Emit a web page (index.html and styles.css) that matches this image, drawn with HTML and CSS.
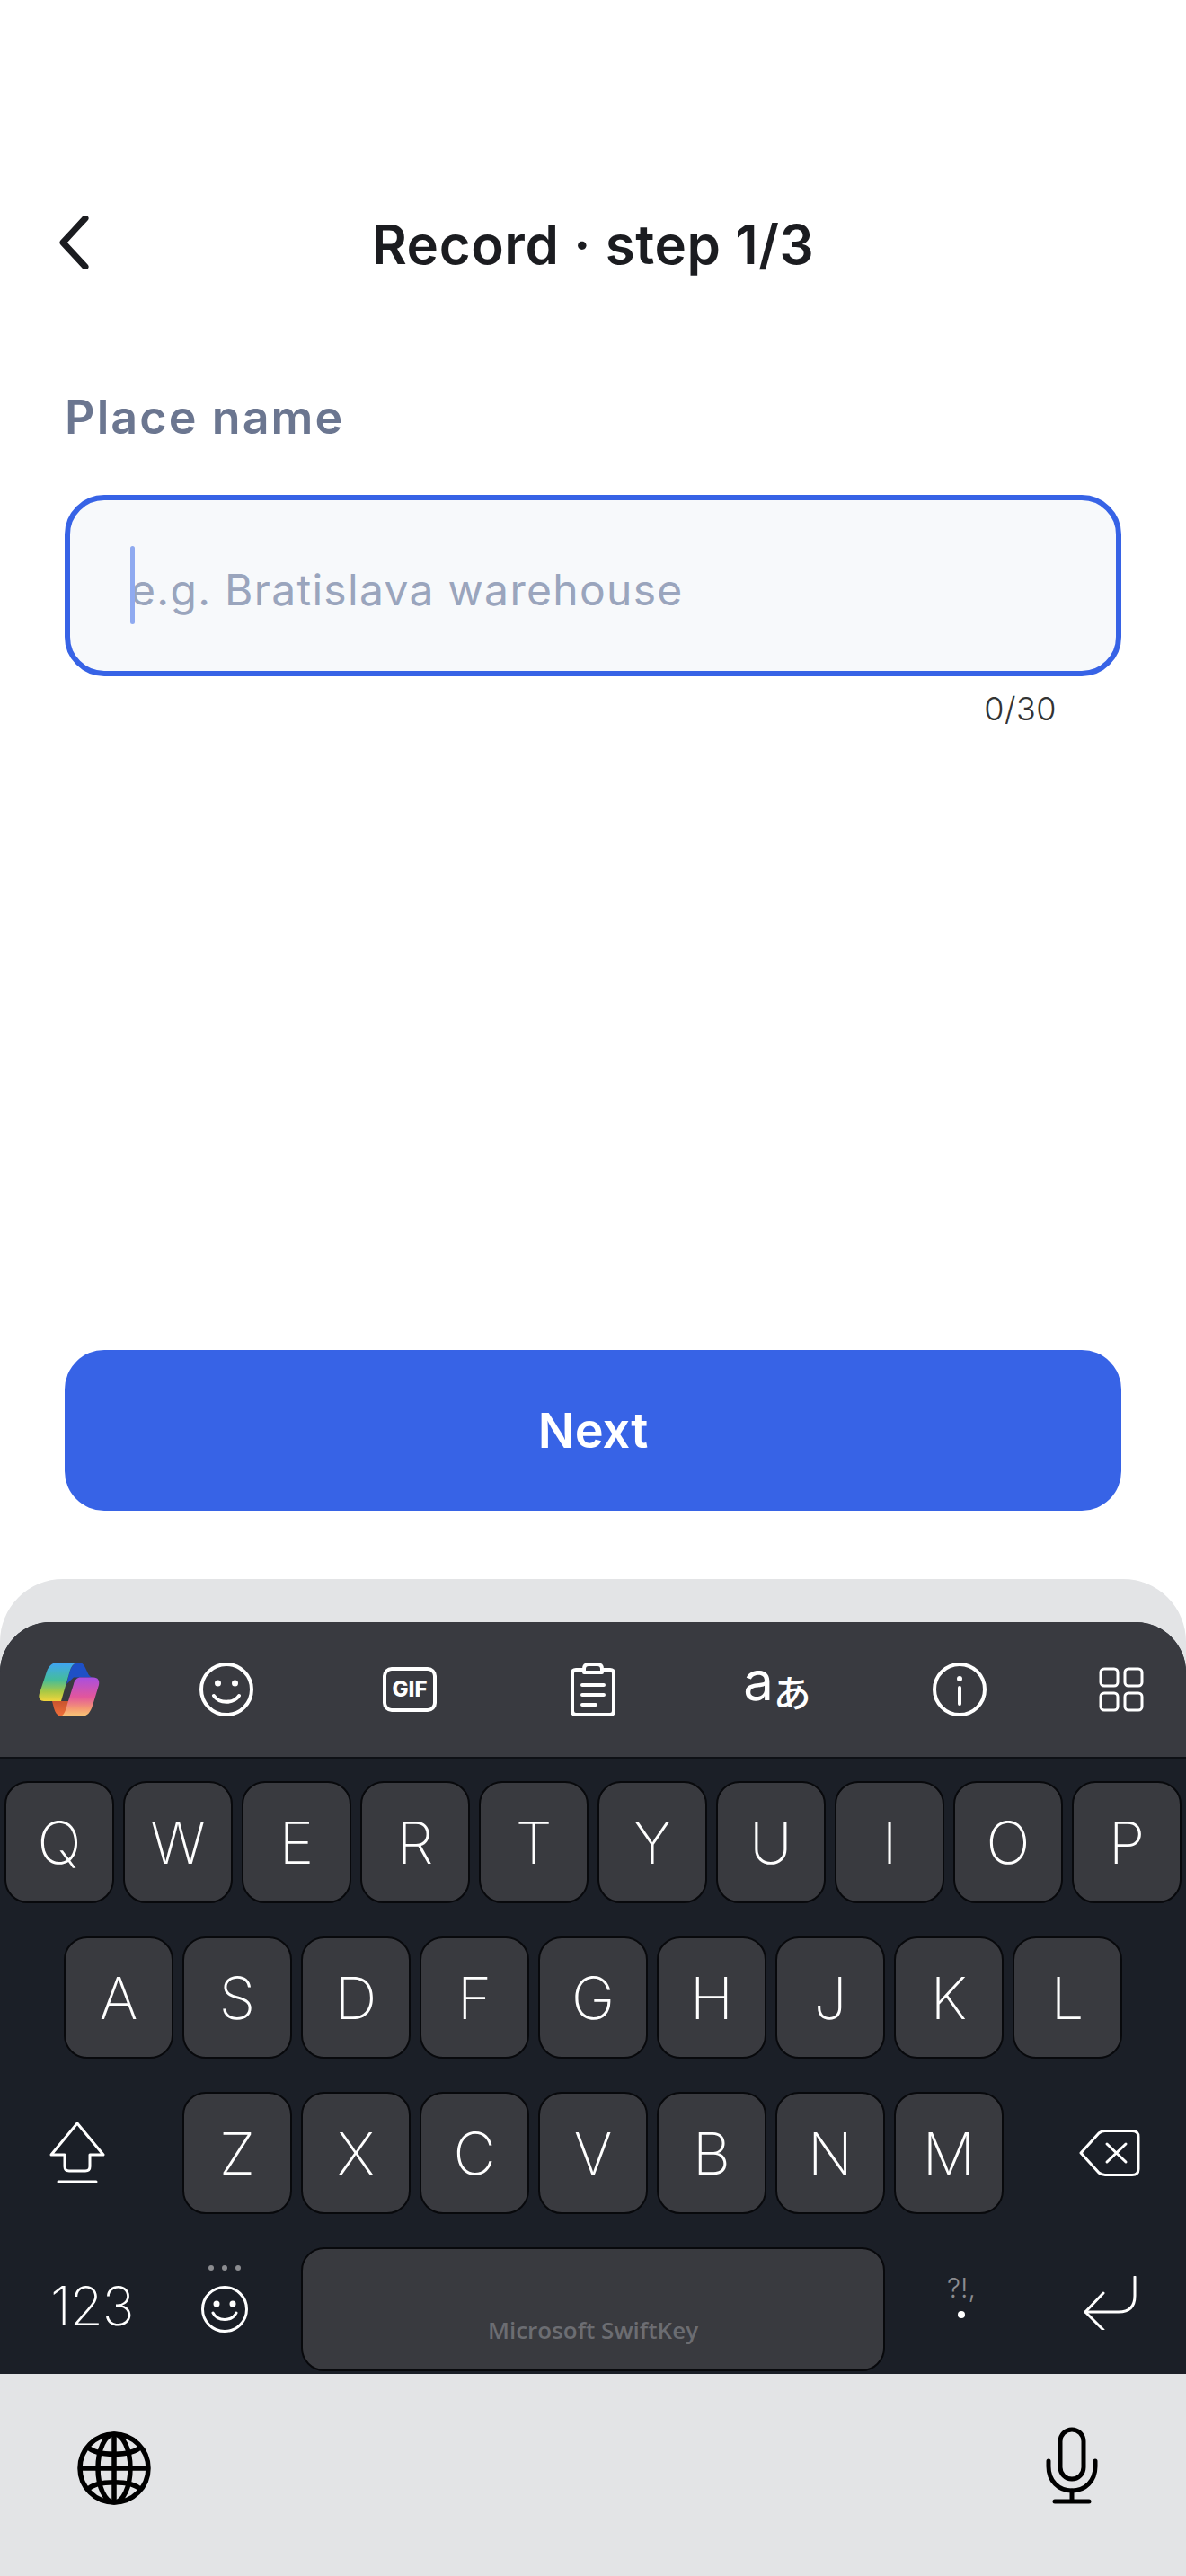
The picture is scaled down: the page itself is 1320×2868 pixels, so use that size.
FILE: index.html
```html
<!DOCTYPE html>
<html lang="en">

<head>
    <meta charset="UTF-8">
    <title>Record</title>
    <link rel="stylesheet" href="styles.css">
</head>

<body>
    <div class="page">
        <div class="main">
            <div class="header">
                <svg class="back" width="36" height="60" viewBox="0 0 36 60">
                    <path d="M30 3 L5 30 L30 57" />
                </svg>
                <div class="title">Record · step 1/3</div>
            </div>

            <div class="label">Place name</div>
            <div class="field">
                <span class="caret"></span>
                <span class="placeholder">e.g. Bratislava warehouse</span>
            </div>
            <div class="count">0/30</div>

            <button class="next">Next</button>
        </div>

        <div class="sheet">
            <div class="board">
                <div class="tools">
                    <div class="tool tool-logo">
                        <svg width="70" height="60" viewBox="0 0 70 60">
                            <defs>
                                <linearGradient id="ribLeft" x1="0" y1="0" x2="0" y2="1">
                                    <stop offset="0" stop-color="#3fa4f7" />
                                    <stop offset="0.45" stop-color="#45bd9a" />
                                    <stop offset="0.75" stop-color="#a9c845" />
                                    <stop offset="1" stop-color="#f2d53c" />
                                </linearGradient>
                                <linearGradient id="ribRight" x1="0" y1="0" x2="0" y2="1">
                                    <stop offset="0" stop-color="#a84fe0" />
                                    <stop offset="0.5" stop-color="#e2569c" />
                                    <stop offset="0.8" stop-color="#f59a72" />
                                    <stop offset="1" stop-color="#f9c878" />
                                </linearGradient>
                                <linearGradient id="ribTail" x1="0" y1="0" x2="0" y2="1">
                                    <stop offset="0" stop-color="#c9542f" />
                                    <stop offset="1" stop-color="#f0703a" />
                                </linearGradient>
                            </defs>
                            <path d="M46 0 C40 0 37 5 35 12 L32 24 L40 16.500 H62 C57 16.500 56 12 54 8 C52 3 50 0 46 0Z" fill="#1e50c6" />
                            <path d="M16 43 C18 50 19 60 27 60 H32 L35 43Z" fill="url(#ribTail)" />
                            <path d="M22 0 C16 0 12 4 10 10 L2 34 C0 40 3 43 7 43 H26 L35 12 C37 4 40 0 46 0Z" fill="url(#ribLeft)" />
                            <path d="M48 16.500 H62 C67 16.500 69 20 68 25 L61 48 C59 55 55 60 49 60 H24 C29 60 31 54 33 46 L40 24 C41 19 44 16.500 48 16.500Z" fill="url(#ribRight)" />
                        </svg>
                    </div>
                    <div class="tool">
                        <svg class="line" width="60" height="60" viewBox="0 0 60 60">
                            <circle cx="30" cy="30" r="28" />
                            <circle class="dot" cx="20.500" cy="23" r="3.500" />
                            <circle class="dot" cx="39.500" cy="23" r="3.500" />
                            <path d="M16 37 C22 46 38 46 44 37" />
                        </svg>
                    </div>
                    <div class="tool">
                        <div class="gif">GIF</div>
                    </div>
                    <div class="tool">
                        <svg class="line" width="50" height="60" viewBox="0 0 50 60">
                            <path d="M15 8 H6 Q2 8 2 12 V54 Q2 58 6 58 H44 Q48 58 48 54 V12 Q48 8 44 8 H35" />
                            <path d="M15 11 V7 Q15 2 20 2 H30 Q35 2 35 7 V11 Z" />
                            <path d="M13 25 H37 M13 36 H37 M13 47 H28" />
                        </svg>
                    </div>
                    <div class="tool translate"><span class="latin">a</span><span class="kana">あ</span></div>
                    <div class="tool">
                        <svg class="line" width="60" height="60" viewBox="0 0 60 60">
                            <circle cx="30" cy="30" r="28" />
                            <circle class="dot" cx="30" cy="18" r="3" />
                            <path d="M30 28 V46" />
                        </svg>
                    </div>
                    <div class="tool tool-grid">
                        <svg class="line thin" width="50" height="50" viewBox="0 0 50 50">
                            <rect x="2" y="2" width="19" height="19" rx="4" />
                            <rect x="29" y="2" width="19" height="19" rx="4" />
                            <rect x="2" y="29" width="19" height="19" rx="4" />
                            <rect x="29" y="29" width="19" height="19" rx="4" />
                        </svg>
                    </div>
                </div>

                <div class="keys">
                    <div class="row">
                        <div class="key">Q</div>
                        <div class="key">W</div>
                        <div class="key">E</div>
                        <div class="key">R</div>
                        <div class="key">T</div>
                        <div class="key">Y</div>
                        <div class="key">U</div>
                        <div class="key">I</div>
                        <div class="key">O</div>
                        <div class="key">P</div>
                    </div>
                    <div class="row">
                        <div class="key">A</div>
                        <div class="key">S</div>
                        <div class="key">D</div>
                        <div class="key">F</div>
                        <div class="key">G</div>
                        <div class="key">H</div>
                        <div class="key">J</div>
                        <div class="key">K</div>
                        <div class="key">L</div>
                    </div>
                    <div class="row">
                        <div class="side side-left">
                            <svg class="line thin" width="62" height="70" viewBox="0 0 62 70">
                                <path d="M31 2 L60 37 H45 V50 Q45 55 40 55 H22 Q17 55 17 50 V37 H2 Z" />
                                <path d="M10 67 H52" />
                            </svg>
                        </div>
                        <div class="key">Z</div>
                        <div class="key">X</div>
                        <div class="key">C</div>
                        <div class="key">V</div>
                        <div class="key">B</div>
                        <div class="key">N</div>
                        <div class="key">M</div>
                        <div class="side side-right">
                            <svg class="line thin" width="68" height="52" viewBox="0 0 68 52">
                                <path d="M2 26 L22 4 Q25 1.500 29 1.500 H59 Q66 1.500 66 8 V44 Q66 50.500 59 50.500 H29 Q25 50.500 22 48 Z" />
                                <path d="M31 16 L52 36 M52 16 L31 36" />
                            </svg>
                        </div>
                    </div>
                    <div class="row row-bottom">
                        <div class="num">123</div>
                        <div class="emoji">
                            <div class="dots"><i></i><i></i><i></i></div>
                            <svg class="line thin" width="52" height="52" viewBox="0 0 52 52">
                                <circle cx="26" cy="26" r="24.500" />
                                <circle class="dot" cx="17" cy="20" r="3.500" />
                                <circle class="dot" cx="35" cy="20" r="3.500" />
                                <path d="M13 30 C18 40 34 40 39 30" />
                            </svg>
                        </div>
                        <div class="space">Microsoft SwiftKey</div>
                        <div class="punct">
                            <span class="punct-top">?!,</span>
                            <span class="punct-dot"></span>
                        </div>
                        <div class="enter">
                            <svg class="line thin" width="60" height="60" viewBox="0 0 60 60">
                                <path d="M58 1 V22 Q58 40 40 40 H3" />
                                <path d="M23 19 L3 40 L23 60" />
                            </svg>
                        </div>
                    </div>
                </div>
            </div>

            <div class="sysbar">
                <svg class="globe" width="82" height="82" viewBox="0 0 82 82">
                    <circle cx="41" cy="41" r="38" />
                    <ellipse cx="41" cy="41" rx="18" ry="38" />
                    <path d="M41 3 V79 M3 41 H79" />
                    <path d="M11 17 C22 28 60 28 71 17 M11 65 C22 54 60 54 71 65" />
                </svg>
                <svg class="mic" width="58" height="86" viewBox="0 0 58 86">
                    <rect x="16" y="3" width="26" height="55" rx="13" />
                    <path d="M3 38 V44 C3 60 14 71 29 71 C44 71 55 60 55 44 V38" />
                    <path d="M29 71 V83 M10 83 H48" />
                </svg>
            </div>
        </div>
    </div>
</body>

</html>
```
FILE: styles.css
```css
body {
    margin: 0;
    background-color: #fff;
    font-family: "Inter", "Liberation Sans", sans-serif;
}

.page {
    width: 1320px;
    height: 2868px;
    display: flex;
    flex-direction: column;
    overflow: hidden;
}

.main {
    height: 1758px;
    box-sizing: border-box;
    padding: 240px 72px 76px;
    display: flex;
    flex-direction: column;
}

.header {
    height: 60px;
    display: flex;
    align-items: center;
    justify-content: center;
    position: relative;
}

.back {
    position: absolute;
    left: -7px;
    top: 0;
}

.back path {
    fill: none;
    stroke: #1b1c20;
    stroke-width: 7;
    stroke-linecap: round;
    stroke-linejoin: round;
}

.title {
    font-size: 60px;
    font-weight: 600;
    letter-spacing: 0.6px;
    color: #1b1c20;
    line-height: 60px;
    margin-top: 3px;
    white-space: nowrap;
}

.label {
    margin-top: 135px;
    font-size: 52px;
    font-weight: 600;
    letter-spacing: 2.100px;
    line-height: 60px;
    color: #6b7690;
}

.field {
    margin-top: 56px;
    height: 202px;
    box-sizing: border-box;
    border: 6px solid #3763e6;
    border-radius: 44px;
    background-color: #f7f9fb;
    padding-left: 67px;
    display: flex;
    align-items: center;
    position: relative;
}

.caret {
    position: absolute;
    left: 67px;
    top: 51px;
    width: 5px;
    height: 87px;
    border-radius: 3px;
    background-color: #8faaf0;
}

.placeholder {
    font-size: 48px;
    color: #9aa5bd;
    letter-spacing: 1.300px;
    margin-top: 8px;
}

.count {
    margin-top: 14px;
    padding-right: 72px;
    text-align: right;
    font-size: 36px;
    font-weight: 300;
    letter-spacing: 0.5px;
    line-height: 44px;
    color: #333;
}

.next {
    margin-top: auto;
    height: 179px;
    border: 0;
    border-radius: 44px;
    background-color: #3763e6;
    color: #fff;
    font-family: inherit;
    font-size: 54px;
    font-weight: 600;
}

.sheet {
    flex: 1;
    background-color: #e3e4e6;
    border-radius: 70px 70px 0 0;
    padding-top: 48px;
    display: flex;
    flex-direction: column;
}

.board {
    height: 837px;
    border-radius: 56px 56px 0 0;
    background-color: #1b1f27;
    overflow: hidden;
}

.tools {
    height: 152px;
    box-sizing: border-box;
    background-color: #393a40;
    border-bottom: 2px solid #0e1015;
    display: grid;
    grid-template-columns: 150px repeat(5, 204px) 150px;
}

.tool {
    display: flex;
    align-items: center;
    justify-content: center;
}

.tool-logo {
    padding-left: 4px;
}

.tool-grid {
    padding-left: 6px;
}

.line {
    fill: none;
    stroke: #fff;
    stroke-width: 4;
    stroke-linecap: round;
    stroke-linejoin: round;
}

.line.thin {
    stroke-width: 3;
}

.line .dot {
    fill: #fff;
    stroke: none;
}

.gif {
    width: 60px;
    height: 50px;
    box-sizing: border-box;
    border: 4px solid #fff;
    border-radius: 10px;
    color: #fff;
    font-size: 24px;
    font-weight: 800;
    line-height: 42px;
    text-align: center;
}

.translate {
    color: #fff;
    align-items: flex-start;
    padding-top: 42px;
    padding-left: 2px;
    line-height: 1;
}

.latin {
    font-size: 60px;
    font-weight: 400;
    margin-top: -7px;
}

.kana {
    font-family: "Noto Sans CJK JP", sans-serif;
    font-size: 42px;
    font-weight: 500;
    margin-top: 14px;
}

.keys {
    padding-top: 25px;
    display: flex;
    flex-direction: column;
    gap: 37px;
}

.row {
    height: 136px;
    display: flex;
    justify-content: center;
    gap: 10px;
}

.key {
    width: 122px;
    box-sizing: border-box;
    border: 2px solid #08090c;
    border-radius: 26px;
    background-color: #393a3f;
    color: #fff;
    font-size: 65px;
    font-weight: 200;
    display: flex;
    align-items: center;
    justify-content: center;
}

.side {
    flex: 0 0 193px;
    box-sizing: border-box;
    display: flex;
    align-items: center;
}

.side-left {
    padding-left: 55px;
}

.side-right {
    justify-content: flex-end;
    padding-right: 51px;
}

.row-bottom {
    height: 138px;
    gap: 0;
    justify-content: flex-start;
    align-items: center;
}

.num {
    width: 137px;
    padding-left: 56px;
    padding-right: 2px;
    margin-bottom: 8px;
    color: #fff;
    font-size: 60px;
    font-weight: 200;
    letter-spacing: -1px;
}

.emoji {
    width: 110px;
    margin-bottom: 24px;
    margin-right: 30px;
    display: flex;
    flex-direction: column;
    align-items: center;
    gap: 17px;
}

.dots {
    display: flex;
    gap: 9px;
}

.dots i {
    width: 6px;
    height: 6px;
    border-radius: 3px;
    background-color: #8b8c90;
}

.space {
    width: 650px;
    height: 138px;
    box-sizing: border-box;
    border: 2px solid #08090c;
    border-radius: 26px;
    background-color: #393a3f;
    color: #6c6d72;
    font-family: "Open Sans", sans-serif;
    font-size: 26px;
    font-weight: 600;
    text-align: center;
    padding-top: 72px;
}

.punct {
    width: 170px;
    margin-bottom: 30px;
    display: flex;
    flex-direction: column;
    align-items: center;
    gap: 10px;
}

.punct-top {
    font-size: 30px;
    font-weight: 300;
    color: #8b8c90;
    line-height: 32px;
}

.punct-dot {
    width: 8px;
    height: 8px;
    border-radius: 4px;
    background-color: #fff;
}

.enter {
    margin-left: 50px;
    margin-top: -14px;
    display: flex;
}

.sysbar {
    flex: 1;
    display: flex;
    justify-content: space-between;
    align-items: center;
    padding: 0 98px 16px 86px;
}

.globe {
    fill: none;
    stroke: #000;
    stroke-width: 5.500;
}

.mic {
    fill: none;
    stroke: #000;
    stroke-width: 5;
    stroke-linecap: round;
    margin-top: -6px;
}
```
